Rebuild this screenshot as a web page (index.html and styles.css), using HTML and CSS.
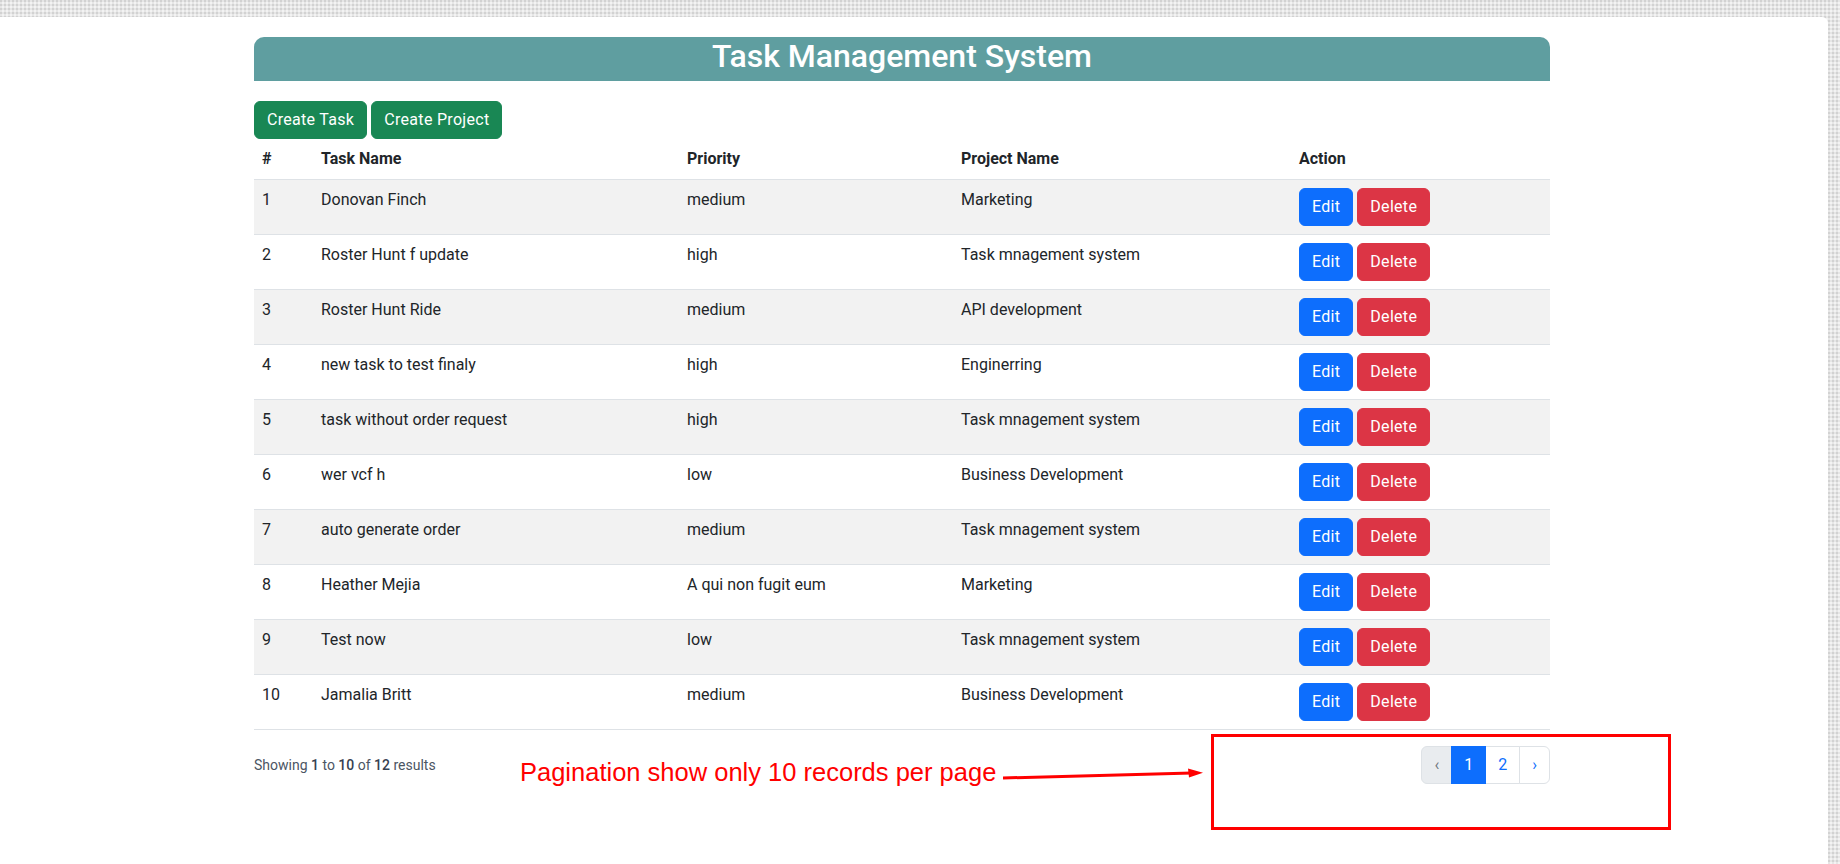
FILE: index.html
```html
<!DOCTYPE html>
<html lang="en">
<head>
<meta charset="utf-8">
<title>Task Management System</title>
<link rel="stylesheet" href="styles.css">
</head>
<body>
<div class="page">
  <div class="container">
    <div class="title-bar"><h2>Task Management System</h2></div>
    <div class="toolbar">
      <a class="btn btn-success">Create Task</a>
      <a class="btn btn-success">Create Project</a>
    </div>
    <table class="table">
      <thead>
        <tr>
          <th class="c-num">#</th>
          <th class="c-task">Task Name</th>
          <th class="c-prio">Priority</th>
          <th class="c-proj">Project Name</th>
          <th class="c-act">Action</th>
        </tr>
      </thead>
      <tbody>
        <tr><td>1</td><td>Donovan Finch</td><td>medium</td><td>Marketing</td><td><div class="actions"><a class="btn btn-primary">Edit</a><a class="btn btn-danger">Delete</a></div></td></tr>
        <tr><td>2</td><td>Roster Hunt f update</td><td>high</td><td>Task mnagement system</td><td><div class="actions"><a class="btn btn-primary">Edit</a><a class="btn btn-danger">Delete</a></div></td></tr>
        <tr><td>3</td><td>Roster Hunt Ride</td><td>medium</td><td>API development</td><td><div class="actions"><a class="btn btn-primary">Edit</a><a class="btn btn-danger">Delete</a></div></td></tr>
        <tr><td>4</td><td>new task to test finaly</td><td>high</td><td>Enginerring</td><td><div class="actions"><a class="btn btn-primary">Edit</a><a class="btn btn-danger">Delete</a></div></td></tr>
        <tr><td>5</td><td>task without order request</td><td>high</td><td>Task mnagement system</td><td><div class="actions"><a class="btn btn-primary">Edit</a><a class="btn btn-danger">Delete</a></div></td></tr>
        <tr><td>6</td><td>wer vcf h</td><td>low</td><td>Business Development</td><td><div class="actions"><a class="btn btn-primary">Edit</a><a class="btn btn-danger">Delete</a></div></td></tr>
        <tr><td>7</td><td>auto generate order</td><td>medium</td><td>Task mnagement system</td><td><div class="actions"><a class="btn btn-primary">Edit</a><a class="btn btn-danger">Delete</a></div></td></tr>
        <tr><td>8</td><td>Heather Mejia</td><td>A qui non fugit eum</td><td>Marketing</td><td><div class="actions"><a class="btn btn-primary">Edit</a><a class="btn btn-danger">Delete</a></div></td></tr>
        <tr><td>9</td><td>Test now</td><td>low</td><td>Task mnagement system</td><td><div class="actions"><a class="btn btn-primary">Edit</a><a class="btn btn-danger">Delete</a></div></td></tr>
        <tr><td>10</td><td>Jamalia Britt</td><td>medium</td><td>Business Development</td><td><div class="actions"><a class="btn btn-primary">Edit</a><a class="btn btn-danger">Delete</a></div></td></tr>
      </tbody>
    </table>
    <div class="pager-row">
      <p class="showing">Showing <b>1</b> to <b>10</b> of <b>12</b> results</p>
      <ul class="pagination">
        <li class="page-item disabled"><span class="page-link">&lsaquo;</span></li>
        <li class="page-item active"><span class="page-link">1</span></li>
        <li class="page-item"><a class="page-link">2</a></li>
        <li class="page-item"><a class="page-link">&rsaquo;</a></li>
      </ul>
    </div>
  </div>

  <div class="note-text">Pagination show only 10 records per page</div>
  <svg class="note-arrow" width="206" height="20" viewBox="0 0 206 20">
    <line x1="3" y1="13" x2="192" y2="8" stroke="#ff0000" stroke-width="3"/>
    <polygon points="188,3.5 203,7.7 189,12.5" fill="#ff0000"/>
  </svg>
  <div class="note-box"></div>
</div>
</body>
</html>
```

FILE: styles.css
```css
html, body {
  margin: 0;
  padding: 0;
  height: 100%;
  overflow: hidden;
}

body {
  font-family: Roboto, "Noto Sans", Arial, sans-serif;
  font-size: 16px;
  line-height: 24px;
  color: #212529;
  background-color: #e6e6e6;
  background-image:
    radial-gradient(circle at 1px 1px, #d2d2d2 0.8px, transparent 1px),
    radial-gradient(circle at 3px 3px, #f3f3f3 0.8px, transparent 1px);
  background-size: 4px 4px, 4px 4px;
}

.page {
  position: relative;
  box-sizing: border-box;
  width: 1828px;
  height: 847px;
  margin-top: 17px;
  padding: 20px 24px 0 0;
  background: #ffffff;
  border-radius: 0 6px 0 0;
}

.container {
  max-width: 1296px;
  margin: 0 auto;
}

.title-bar {
  background: #5f9ea0;
  border-radius: 10px 10px 0 0;
  height: 44px;
  box-sizing: border-box;
  padding-bottom: 6px;
}

.title-bar h2 {
  margin: 0;
  text-align: center;
  color: #ffffff;
  font-size: 32px;
  font-weight: 500;
  line-height: 38px;
}

.toolbar {
  display: flex;
  gap: 4px;
  margin-top: 20px;
}

.btn {
  display: inline-block;
  box-sizing: border-box;
  height: 38px;
  padding: 6px 12px;
  border: 1px solid transparent;
  border-radius: 6px;
  font-size: 16px;
  line-height: 24px;
  letter-spacing: 0.3px;
  color: #ffffff;
  text-decoration: none;
  white-space: nowrap;
}

.btn-success { background: #198754; border-color: #198754; }
.btn-primary { background: #0d6efd; border-color: #0d6efd; }
.btn-danger  { background: #dc3545; border-color: #dc3545; }

.table {
  width: 100%;
  border-collapse: collapse;
  table-layout: fixed;
  margin: 0 0 16px 0;
}

.table th,
.table td {
  box-sizing: border-box;
  padding: 8px;
  text-align: left;
  vertical-align: top;
  border-bottom: 1px solid #dee2e6;
}

.table th {
  font-weight: 700;
}

.c-num  { width: 59px; }
.c-task { width: 366px; }
.c-prio { width: 274px; }
.c-proj { width: 338px; }
.c-act  { width: 259px; }

.table tbody tr:nth-child(odd) td {
  background: #f2f2f2;
}

.actions {
  display: flex;
  gap: 4px;
}

.pager-row {
  display: flex;
  justify-content: space-between;
  align-items: center;
}

.showing {
  margin: 0;
  font-size: 14px;
  line-height: 20px;
  color: #4b5563;
}

.showing b {
  font-weight: 500;
  color: #374151;
}

.pagination {
  display: flex;
  list-style: none;
  margin: 0;
  padding: 0;
}

.page-item + .page-item {
  margin-left: -1px;
}

.page-link {
  display: block;
  padding: 6px 12px;
  font-size: 16px;
  line-height: 24px;
  color: #0d6efd;
  background: #ffffff;
  border: 1px solid #dee2e6;
  text-decoration: none;
}

.page-item:first-child .page-link {
  border-radius: 6px 0 0 6px;
}

.page-item:last-child .page-link {
  border-radius: 0 6px 6px 0;
}

.page-item.disabled .page-link {
  color: #6c757d;
  background: #e9ecef;
}

.page-item.active .page-link {
  position: relative;
  z-index: 1;
  color: #ffffff;
  background: #0d6efd;
  border-color: #0d6efd;
}

.note-text {
  position: absolute;
  left: 520px;
  top: 743px;
  font-family: "Liberation Sans", Arial, sans-serif;
  font-size: 25.5px;
  line-height: 25.5px;
  color: #ff0000;
  white-space: nowrap;
}

.note-arrow {
  position: absolute;
  left: 1000px;
  top: 748px;
}

.note-box {
  position: absolute;
  left: 1211px;
  top: 717px;
  width: 460px;
  height: 96px;
  box-sizing: border-box;
  border: 3px solid #ff0000;
}
```
